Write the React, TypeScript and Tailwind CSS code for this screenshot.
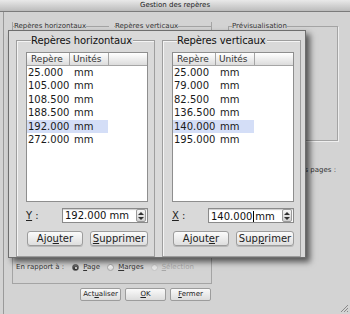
import React from "react";

const hRows = ["25.000", "105.000", "108.500", "188.500", "192.000", "272.000"];
const vRows = ["25.000", "79.000", "82.500", "136.500", "140.000", "195.000"];

function Spinner() {
  return (
    <div className="mr-[1px] flex h-[13px] w-[10px] flex-col items-center justify-center gap-[2px] rounded-[2px] border border-[#9a9a9a] bg-gradient-to-b from-[#f6f6f6] to-[#d0d0d0]">
      <svg width="6" height="3" viewBox="0 0 6 3">
        <path d="M0 3 L3 0 L6 3 Z" fill="#333" />
      </svg>
      <svg width="6" height="3" viewBox="0 0 6 3">
        <path d="M0 0 L6 0 L3 3 Z" fill="#333" />
      </svg>
    </div>
  );
}

function MacButton({ children, w }: { children: React.ReactNode; w: string }) {
  return (
    <button
      type="button"
      className={`${w} h-[15px] rounded-[3px] border border-[#9c9c9c] bg-gradient-to-b from-[#fbfbfb] to-[#dedede] text-[10px] leading-[13px] text-[#222] shadow-[0_1px_0_rgba(0,0,0,0.15)]`}
    >
      {children}
    </button>
  );
}

function GuideGroup({
  title,
  axis,
  value,
  rows,
  selected,
  caret,
  add,
  remove,
}: {
  title: string;
  axis: string;
  value: string;
  rows: string[];
  selected: number;
  caret?: boolean;
  add: React.ReactNode;
  remove: React.ReactNode;
}) {
  return (
    <fieldset className="w-[139px] border border-[#9e9e9e] pb-[6px] pl-[9px] shadow-[inset_1px_1px_0_#f4f4f4]">
      <legend className="ml-[5px] bg-[#d9d9d9] pr-[1px] text-[10px] leading-[13px] tracking-[-0.1px] text-[#111]">
        {title}
      </legend>
      {/* list */}
      <div className="mt-[5px] h-[150px] w-[122px] border border-[#8e8e8e] bg-white">
        <div className="flex h-[13px] border-b border-[#a5a5a5] bg-gradient-to-b from-[#ffffff] to-[#dcdcdc] text-[9px] leading-[12px] text-[#333]">
          <div className="w-[43px] border-r border-[#a5a5a5] pl-[4px]">Repère</div>
          <div className="w-[39px] border-r border-[#a5a5a5] pl-[3px]">Unités</div>
          <div className="flex-1" />
        </div>
        {rows.map((r, i) => (
          <div
            key={r}
            className={`flex h-[13.4px] w-[81px] text-[10px] leading-[13.4px] text-[#1a1a1a] ${
              i === selected ? "bg-[#d4def7]" : ""
            }`}
          >
            <div className="w-[46px] pl-[1px]">{r}</div>
            <div className="pl-[1px]">mm</div>
          </div>
        ))}
      </div>
      {/* value */}
      <div className="mt-[6px] flex h-[15px] items-center">
        <div className="w-[36px] text-[10px] text-[#222]">
          <span className="underline">{axis}</span> :
        </div>
        <div className="flex h-[15px] w-[86px] items-center border border-[#8a8a8a] bg-white pl-[2px] text-[10px] leading-[13px] text-[#111] shadow-[inset_0_1px_1px_rgba(0,0,0,0.2)]">
          <span className="flex-1 whitespace-nowrap">
            {caret ? (
              <>
                {value.split(" ")[0]}
                <span className="mx-[1px] inline-block h-[11px] w-[1px] translate-y-[2px] bg-black" />
                {value.split(" ")[1]}
              </>
            ) : (
              value
            )}
          </span>
          <Spinner />
        </div>
      </div>
      {/* actions */}
      <div className="mt-[8px] flex gap-[7px] pl-[1px]">
        <MacButton w="w-[56px]">{add}</MacButton>
        <MacButton w="w-[58px]">{remove}</MacButton>
      </div>
    </fieldset>
  );
}

function Radio({ on, disabled }: { on?: boolean; disabled?: boolean }) {
  return (
    <span
      className={`inline-flex h-[7px] w-[7px] items-center justify-center rounded-full border ${
        on
          ? "border-[#555] bg-gradient-to-b from-[#777] to-[#222]"
          : disabled
            ? "border-[#c4c4c4] bg-[#e6e6e6]"
            : "border-[#aaa] bg-gradient-to-b from-[#fff] to-[#d8d8d8]"
      }`}
    >
      {on && <span className="h-[2px] w-[2px] rounded-full bg-[#eee]" />}
    </span>
  );
}

export default function App() {
  return (
    <div className="relative h-[314px] w-[350px] overflow-hidden bg-[#d3d3d3] font-['DejaVu_Sans',sans-serif] text-[#222]">
      {/* title bar */}
      <div className="flex h-[12px] items-center justify-center border-b border-[#7c7c7c] bg-gradient-to-b from-[#e9e9e9] to-[#bcbcbc] text-[7px] leading-[11px] text-[#1c1c1c]">
        Gestion des repères
      </div>

      {/* dialog body, partly hidden by the floating panel */}
      <div className="ml-[3px] flex h-[302px] flex-col border-l border-[#9a9a9a]">
        <div className="flex pt-[10px]">
          <div className="ml-[8px] flex w-[200px] flex-col">
            <div className="flex h-[262px] flex-col border-x border-b border-[#a4a4a4]">
              <div className="flex">
                <fieldset className="w-[96px] border-t border-[#a4a4a4]">
                  <legend className="ml-[1px] text-[7px] leading-[9px] text-[#333]">Repères horizontaux</legend>
                </fieldset>
                <fieldset className="ml-[5px] flex-1 border-t border-[#a4a4a4]">
                  <legend className="ml-[1px] text-[7px] leading-[9px] text-[#333]">Repères verticaux</legend>
                </fieldset>
              </div>
              <div className="flex-1" />
              <div className="mb-[11px] flex items-center gap-[4px] pl-[3px] text-[7px] leading-[9px] text-[#333]">
                <span className="mr-[4px]">En rapport à :</span>
                <Radio on />
                <span className="mr-[3px]">
                  <span className="underline">P</span>age
                </span>
                <Radio />
                <span className="mr-[3px]">
                  <span className="underline">M</span>arges
                </span>
                <Radio disabled />
                <span className="text-[#a8a8a8]">
                  <span className="underline">S</span>élection
                </span>
              </div>
            </div>
          </div>

          <div className="ml-[16px] flex w-[110px] flex-col">
            <fieldset className="h-[119px] border border-[#a4a4a4] shadow-[1px_1px_0_#efefef]">
              <legend className="ml-[3px] text-[7px] leading-[9px] text-[#333]">Prévisualisation</legend>
            </fieldset>
            <div className="mt-[25px] whitespace-nowrap pr-[2px] text-right text-[7px] leading-[9px] text-[#333]">
              Appliquer à toutes les pages :
            </div>
          </div>
        </div>

        <div className="ml-[76px] mt-[4px] flex gap-[4px]">
          {[
            ["Act", "u", "aliser"],
            ["", "O", "K"],
            ["", "F", "ermer"],
          ].map(([a, b, c]) => (
            <button
              key={b + c}
              type="button"
              className="h-[13px] w-[41px] rounded-[2px] border border-[#9c9c9c] bg-gradient-to-b from-[#fafafa] to-[#dcdcdc] text-[7px] leading-[11px] text-[#222]"
            >
              {a}
              <span className="underline">{b}</span>
              {c}
            </button>
          ))}
        </div>
      </div>

      {/* floating guides panel */}
      <div className="absolute left-[8px] top-[30px] flex h-[228px] w-[298px] gap-[7px] border border-[#6e6e6e] bg-[#d9d9d9] pl-[7px] pt-[3px] shadow-[4px_4px_6px_rgba(0,0,0,0.6)]">
        <GuideGroup
          title="Repères horizontaux"
          axis="Y"
          value="192.000 mm"
          rows={hRows}
          selected={4}
          add={
            <>
              Ajo<span className="underline">u</span>ter
            </>
          }
          remove={
            <>
              <span className="underline">S</span>upprimer
            </>
          }
        />
        <GuideGroup
          title="Repères verticaux"
          axis="X"
          value="140.000 mm"
          rows={vRows}
          selected={4}
          caret
          add={
            <>
              Ajout<span className="underline">e</span>r
            </>
          }
          remove={
            <>
              Sup<span className="underline">p</span>rimer
            </>
          }
        />
      </div>

      {/* resize grip */}
      <svg className="absolute bottom-[1px] right-[1px]" width="9" height="9" viewBox="0 0 9 9">
        <path d="M8 1 L1 8 M8 4 L4 8 M8 7 L7 8" stroke="#8a8a8a" strokeWidth="1" />
      </svg>
    </div>
  );
}
